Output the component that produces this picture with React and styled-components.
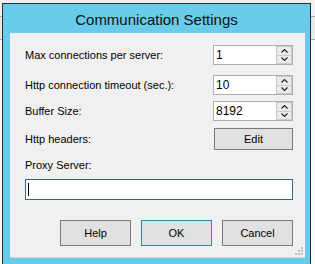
import React from 'react'
import styled, { createGlobalStyle } from 'styled-components'

const GlobalStyle = createGlobalStyle`
  html, body {
    margin: 0;
    padding: 0;
  }
  body {
    width: 315px;
    height: 264px;
    overflow: hidden;
    font-family: "Liberation Sans", Arial, sans-serif;
    background: linear-gradient(
      to bottom,
      #f0f0f0 0,
      #f0f0f0 16px,
      #a9a9a9 16px,
      #a9a9a9 17px,
      #e9e9e9 17px,
      #e9e9e9 39px,
      #a9a9a9 39px,
      #a9a9a9 40px,
      #fbfbfb 40px
    );
  }
`

const SpinArrow = ({ down }) => (
  <svg width="7" height="4" viewBox="0 0 7 4">
    <polyline
      points={down ? '0.5,0.5 3.5,3.5 6.5,0.5' : '0.5,3.5 3.5,0.5 6.5,3.5'}
      fill="none"
      stroke="#1e1e1e"
      strokeWidth="1.1"
    />
  </svg>
)

const SpinBox = ({ value }) => (
  <SpinFrame>
    <SpinValue>{value}</SpinValue>
    <SpinButtons>
      <SpinButton>
        <SpinArrow />
      </SpinButton>
      <SpinButton>
        <SpinArrow down />
      </SpinButton>
    </SpinButtons>
  </SpinFrame>
)

const SizeGrip = () => (
  <Grip width="9" height="9" viewBox="0 0 9 9">
    <rect x="6" y="0" width="2" height="2" fill="#bdbdbd" />
    <rect x="3" y="3" width="2" height="2" fill="#bdbdbd" />
    <rect x="6" y="3" width="2" height="2" fill="#bdbdbd" />
    <rect x="0" y="6" width="2" height="2" fill="#bdbdbd" />
    <rect x="3" y="6" width="2" height="2" fill="#bdbdbd" />
    <rect x="6" y="6" width="2" height="2" fill="#bdbdbd" />
  </Grip>
)

export default function App() {
  return (
    <>
      <GlobalStyle />
      <Backdrop>
        <Window>
          <TitleBar>Communication Settings</TitleBar>
          <Client>
            <Row $gap={12}>
              <Label>Max connections per server:</Label>
              <SpinBox value="1" />
            </Row>
            <Row $gap={10}>
              <Label>Http connection timeout (sec.):</Label>
              <SpinBox value="10" />
            </Row>
            <Row $gap={6}>
              <Label>Buffer Size:</Label>
              <SpinBox value="8192" />
            </Row>
            <Row $gap={7}>
              <Label>Http headers:</Label>
              <Button $width={79} $height={22}>
                Edit
              </Button>
            </Row>
            <FieldLabel>Proxy Server:</FieldLabel>
            <TextField>
              <Caret />
            </TextField>
            <ButtonBar>
              <Button>Help</Button>
              <Button $primary>OK</Button>
              <Button>Cancel</Button>
            </ButtonBar>
            <SizeGrip />
          </Client>
        </Window>
      </Backdrop>
    </>
  )
}

const Backdrop = styled.div`
  padding: 3px 0 0 2px;
`

const Window = styled.div`
  width: 309px;
  height: 261px;
  box-sizing: border-box;
  border: 1px solid #2b2b2b;
  border-bottom: 0;
  background: #69cbea;
  padding: 0 5px 0 7px;
  display: flex;
  flex-direction: column;
`

const TitleBar = styled.div`
  height: 29px;
  display: flex;
  align-items: center;
  justify-content: center;
  font-size: 15px;
  color: #111;
  margin-left: -2px;
  padding-top: 1px;
  box-sizing: border-box;
`

const Client = styled.div`
  position: relative;
  height: 224px;
  background: #f0f0f0;
  box-shadow: 0 1px 0 #c9d9de;
  padding: 0 12px 0 15px;
  display: flex;
  flex-direction: column;
`

const Row = styled.div`
  display: flex;
  align-items: center;
  justify-content: space-between;
  margin-top: ${p => p.$gap}px;
`

const Label = styled.span`
  font-size: 11px;
  color: #000;
`

const FieldLabel = styled(Label)`
  display: block;
  line-height: 13px;
  margin-top: 9px;
`

const SpinFrame = styled.div`
  width: 80px;
  height: 20px;
  box-sizing: border-box;
  border: 1px solid #abadb3;
  background: #fff;
  display: flex;
`

const SpinValue = styled.span`
  flex: 1;
  padding-left: 2px;
  font-size: 12px;
  line-height: 18px;
  color: #000;
`

const SpinButtons = styled.div`
  width: 16px;
  display: flex;
  flex-direction: column;
  gap: 1px;
  padding: 1px;
  box-sizing: border-box;
  background: #c9c9c9;
`

const SpinButton = styled.div`
  flex: 1;
  display: flex;
  align-items: center;
  justify-content: center;
  background: #ebebeb;
`

const Button = styled.div`
  width: ${p => p.$width || 71}px;
  height: ${p => p.$height || 26}px;
  box-sizing: border-box;
  border: 1px solid ${p => (p.$primary ? '#3c7fb1' : '#7a7a7a')};
  background: #e1e1e1;
  display: flex;
  align-items: center;
  justify-content: center;
  font-size: 11px;
  color: #000;
`

const TextField = styled.div`
  margin-top: 7px;
  height: 21px;
  box-sizing: border-box;
  border: 1px solid #2f6792;
  background: #fff;
  display: flex;
  align-items: center;
  padding-left: 2px;
`

const Caret = styled.span`
  width: 1px;
  height: 13px;
  background: #000;
`

const ButtonBar = styled.div`
  display: flex;
  justify-content: flex-end;
  gap: 10px;
  margin-top: 20px;
`

const Grip = styled.svg`
  position: absolute;
  right: 1px;
  bottom: 1px;
`
